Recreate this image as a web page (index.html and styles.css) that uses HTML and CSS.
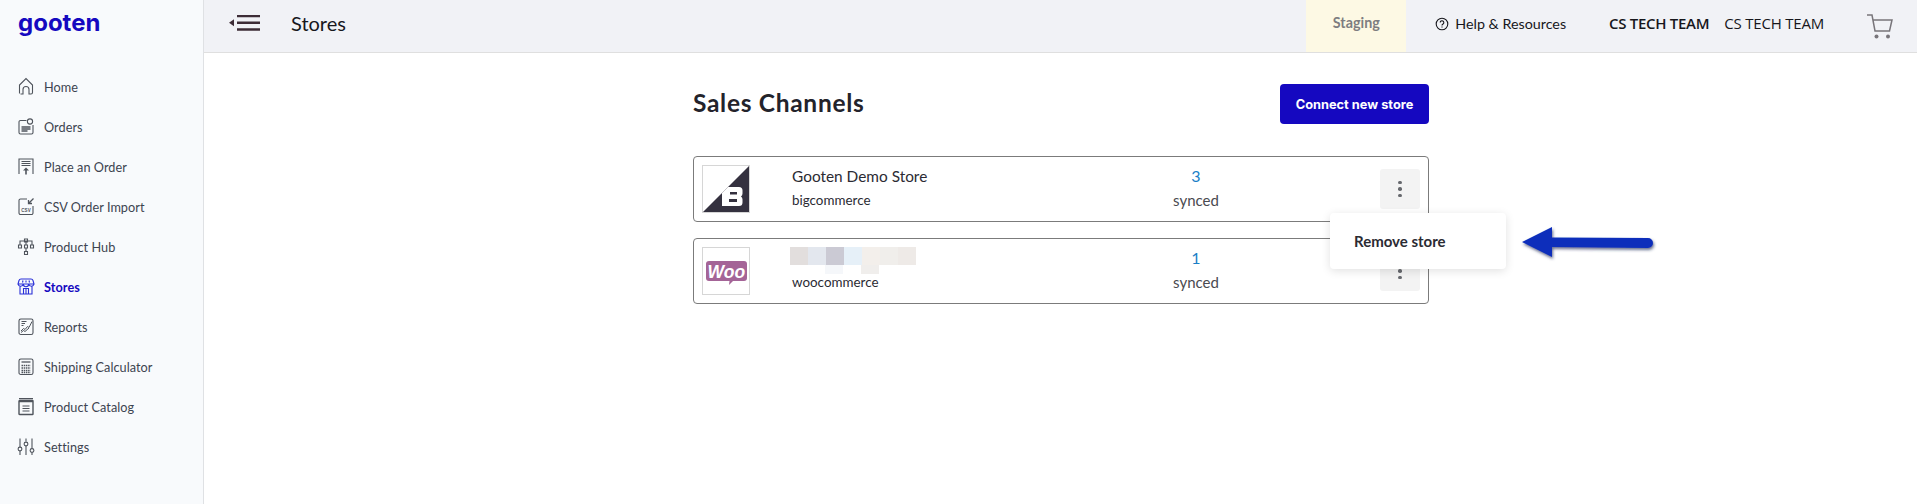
FILE: index.html
```html
<!DOCTYPE html>
<html lang="en">
<head>
<meta charset="utf-8">
<title>Stores</title>
<link rel="stylesheet" href="styles.css">
</head>
<body>
<div class="app">
  <aside class="sidebar">
    <div class="logo">gooten</div>
    <nav class="nav">
      <a class="nav-item"><svg class="ico" viewBox="0 0 16 16"><path d="M1.500 14.500V6L8 -.5 14.500 6v7.500a1.500 1.500 0 0 1-1.500 1.500H11V10.500a3 3 0 0 0-6 0V15H2.500"/></svg>Home</a>
      <a class="nav-item"><svg class="ico" viewBox="0 0 16 16"><path d="M8.500 1.500H2.500A1.500 1.500 0 0 0 1 3v10.500A1.500 1.500 0 0 0 2.500 15h11a1.500 1.500 0 0 0 1.500-1.500V6"/><circle cx="12" cy="2.500" r="2.600"/><path d="M3.500 8h9M3.500 10h9M3.500 12h6" stroke-width="1.300"/></svg>Orders</a>
      <a class="nav-item"><svg class="ico" viewBox="0 0 16 16"><path d="M1 15V0h14v15M3.500 2.500h9M3.500 4.500h9M3.500 6.500h9"/><path d="M8 15.500v-5" stroke-width="1.600"/><path class="ico-fill" d="M5 11.500 8 8.500l3 3z"/></svg>Place an Order</a>
      <a class="nav-item"><svg class="ico" viewBox="0 0 16 16"><path d="M9 0H2.500A1.500 1.500 0 0 0 1 1.500V14a1.500 1.500 0 0 0 1.500 1.500h11A1.500 1.500 0 0 0 15 14V7"/><path d="M15.500 -.5 10.500 4.500M10.500 1v3.500h3.500" stroke-width="1.300"/><text x="8" y="12.500" class="csv">CSV</text></svg>CSV Order Import</a>
      <a class="nav-item"><svg class="ico" viewBox="0 0 16 16"><path d="M6.500 0h3v3h-3zM.5 6h3v3h-3zM6.500 6h3v3h-3zM12.500 6h3v3h-3zM6.500 12.500h3v3h-3zM2 6V2h12v4M8 3v3M8 9v3.500"/></svg>Product Hub</a>
      <a class="nav-item active"><svg class="ico" viewBox="0 0 16 16"><path d="M3 0h10q1.500 0 2 1.500L16 5H0L1 1.500Q1.500 0 3 0zM0 5a2.700 2.700 0 0 0 5.300 0 2.700 2.700 0 0 0 5.400 0 2.700 2.700 0 0 0 5.300 0M2 7.500V15h12V7.500M5.500 15V9.500h5V15M8 9.500V15M5 1.500 4.500 3.500M8 1.500v2M11 1.500l.5 2"/></svg>Stores</a>
      <a class="nav-item"><svg class="ico" viewBox="0 0 16 16"><rect x="1" y="0" width="14" height="15.500" rx="1.800"/><path d="M3.500 2.500h5M3.500 4.500h3.500M3.500 6.500h2M3 12l2.500-2.500 1.500 1 2.500-3 1.500 1 3-6M3 13.500l2.500-2 1.500 1 4-3.500" stroke-width="1"/></svg>Reports</a>
      <a class="nav-item"><svg class="ico" viewBox="0 0 16 16"><rect x="1" y="0" width="14" height="15.500" rx="1.800"/><path d="M3.500 3h9" stroke-width="1.300"/><path d="M3.500 6.500h9M3.500 9h9M3.500 11.500h9M3.500 13.500h9" stroke-width="1.300" stroke-dasharray="1.500 .7"/></svg>Shipping Calculator</a>
      <a class="nav-item"><svg class="ico" viewBox="0 0 16 16"><rect x="1" y="1.500" width="14" height="14" rx=".6" stroke-width="1.400"/><path d="M1 -.5h14" stroke-width="1"/><path d="M1 2h14" stroke-width="2.500"/><path d="M4.500 7h7M4.500 9.500h7M4.500 12h7"/></svg>Product Catalog</a>
      <a class="nav-item"><svg class="ico" viewBox="0 0 16 16"><path d="M2 -.5v8.500M2 12v4M8 -.5v3M8 7v9M14 -.5v10M14 13.500V16"/><circle cx="2" cy="10" r="1.900"/><circle cx="8" cy="5" r="1.900"/><circle cx="14" cy="11.500" r="1.900"/></svg>Settings</a>
    </nav>
  </aside>
  <div class="content">
    <header class="topbar">
      <div class="topbar-left">
        <svg class="menu-toggle" viewBox="0 0 32 16"><path class="menu-tip" d="M0 7.700l5-3.500v7z"/><path class="menu-bars" d="M8 1h23M8 7.700h23M8 14.500h23"/></svg>
        <span class="page-title">Stores</span>
      </div>
      <div class="topbar-right">
        <div class="env">Staging</div>
        <div class="help"><svg class="help-ico" viewBox="0 0 14 14"><circle cx="7" cy="7" r="5.800"/><path d="M5.200 5.600a1.800 1.800 0 1 1 2.800 1.500c-.7.400-1 .8-1 1.500"/><path d="M7 9.600v1"/></svg>Help &amp; Resources</div>
        <div class="team team-strong">CS TECH TEAM</div>
        <div class="team">CS TECH TEAM</div>
        <svg class="cart" viewBox="0 0 26 25"><path d="M0 1h5l3 16h14.500L25 6H6"/><circle cx="9.500" cy="22.500" r="2" class="cart-wheel"/><circle cx="21" cy="22.500" r="2" class="cart-wheel"/></svg>
      </div>
    </header>
    <main class="main">
      <div class="channels">
        <div class="channels-head">
          <h1 class="channels-title">Sales Channels</h1>
          <button class="connect">Connect new store</button>
        </div>
        <div class="store-card">
          <div class="store-logo">
            <svg viewBox="0 0 46 46" class="store-svg"><path class="bc" d="M46 0v46H0z"/><path class="bc-b" d="M25 21h11q3.500 0 3.500 3.500v3q0 2-1.500 3 1.500 1 1.500 3v3q0 3.500-3.500 3.500H19V27zM27 26v2.500h7V26zM26 33v3h8v-3z"/></svg>
          </div>
          <div class="store-info">
            <div class="store-name">Gooten Demo Store</div>
            <div class="store-type">bigcommerce</div>
          </div>
          <div class="store-sync">
            <div class="sync-count">3</div>
            <div class="sync-label">synced</div>
          </div>
          <div class="kebab"><i></i><i></i><i></i></div>
          <div class="popup">Remove store</div>
        </div>
        <div class="store-card">
          <div class="store-logo">
            <svg viewBox="0 0 46 46" class="store-svg"><path class="woo" d="M6 13h35q3 0 3 3v14q0 3-3 3H30l-4 4 .5-4H6q-3 0-3-3V16q0-3 3-3z"/><text x="4.500" y="29.500" class="woo-text">Woo</text></svg>
          </div>
          <div class="store-info">
            <div class="blur-name">
              <div class="blur-row"><i class="b1"></i><i class="b2"></i><i class="b3"></i><i class="b4"></i><i class="b5"></i><i class="b6"></i><i class="b7"></i></div>
              <div class="blur-row blur-low"><i class="b8"></i><i class="b9"></i></div>
            </div>
            <div class="store-type">woocommerce</div>
          </div>
          <div class="store-sync">
            <div class="sync-count">1</div>
            <div class="sync-label">synced</div>
          </div>
          <div class="kebab"><i></i><i></i><i></i></div>
        </div>
      </div>
      <svg class="arrow" viewBox="0 0 140 44"><defs><filter id="s" x="-20%" y="-40%" width="140%" height="180%"><feDropShadow dx="1" dy="2" stdDeviation="1.500" flood-color="#2a3560" flood-opacity=".7"/></filter></defs><path class="arrow-shape" filter="url(#s)" d="M2 21 32 6V16.500L128 17a5 5 0 0 1 0 10L32 26V36z"/></svg>
    </main>
  </div>
</div>
</body>
</html>
```
FILE: styles.css
```css
* { box-sizing: border-box; }
html, body { margin: 0; height: 100%; }
body { font-family: "Lato", "Noto Sans", sans-serif; color: #2b2b33; background: #fff; overflow: hidden; }
.app { display: flex; height: 504px; }

.sidebar { width: 204px; flex: none; background: #f8fafc; border-right: 1px solid #dfe1e4; padding: 10px 0 0 18px; }
.logo { font-family: "Inter", sans-serif; font-size: 24px; line-height: 26px; font-weight: 700; color: #1508c0; height: 26px; }
.nav { display: flex; flex-direction: column; margin-top: 31px; }
.nav-item { display: flex; align-items: center; height: 40px; gap: 10px; font-size: 12.700px; letter-spacing: .05px; color: #3d4450; }
.ico { width: 16px; height: 16px; flex: none; fill: none; stroke: #4f545c; stroke-width: 1.100; overflow: visible; }
.ico-fill { fill: #4f545c; stroke: none; }
.csv { font-family: "Liberation Sans", sans-serif; font-size: 4.500px; font-weight: 700; fill: #4f545c; stroke: none; text-anchor: middle; }
.active { color: #1508c0; font-weight: 700; }
.active .ico { stroke: #2a30d8; }

.content { flex: 1; display: flex; flex-direction: column; min-width: 0; }
.topbar { display: flex; justify-content: space-between; height: 53px; background: #f1f2f6; border-bottom: 1px solid #dfdfdf; flex: none; }
.topbar-left { display: flex; align-items: center; padding: 0 0 6px 25px; }
.menu-toggle { width: 32px; height: 16px; }
.menu-tip { fill: #3d2c36; }
.menu-bars { fill: none; stroke: #3d2c36; stroke-width: 2.500; }
.page-title { margin: 0 0 1px 30px; font-size: 20px; color: #17171c; }
.topbar-right { display: flex; align-items: center; }
.env { width: 100px; height: 52px; background: #fdf9e4; display: flex; align-items: center; justify-content: center; font-size: 14.300px; font-weight: 700; color: #7d7d80; padding-bottom: 7px; }
.help { display: flex; align-items: center; gap: 6px; margin-left: 29px; padding-bottom: 5px; font-size: 14.300px; color: #17171c; }
.help-ico { width: 14px; height: 14px; fill: none; stroke: #17171c; stroke-width: 1.100; }
.team { font-family: "Open Sans", sans-serif; font-size: 15px; color: #17171c; margin-left: 15px; padding-bottom: 7px; letter-spacing: -.2px; }
.team-strong { font-weight: 600; margin-left: 43px; letter-spacing: -.3px; }
.cart { width: 26px; height: 25px; margin-left: 43px; margin-right: 24px; fill: none; stroke: #78757a; stroke-width: 1.500; }
.cart-wheel { fill: #78757a; stroke: none; }

.main { flex: 1; position: relative; padding-left: 489px; }
.channels { width: 736px; }
.channels-head { display: flex; justify-content: space-between; align-items: center; height: 40px; margin-top: 31px; }
.channels-title { margin: 0 0 3px; font-size: 24.500px; font-weight: 700; color: #23232b; letter-spacing: .7px; }
.connect { width: 149px; height: 40px; background: #1508c0; color: #fff; border: 0; border-radius: 4px; font-family: "Inter", sans-serif; font-size: 12.800px; font-weight: 700; }
.store-card { position: relative; display: flex; align-items: center; height: 66px; margin-top: 16px; padding: 8px; border: 1px solid #7b7b7b; border-radius: 4px; }
.channels-head + .store-card { margin-top: 32px; }
.store-logo { width: 48px; height: 48px; flex: none; border: 1px solid #d6d6d6; }
.store-svg { display: block; width: 46px; height: 46px; }
.bc { fill: #34313f; }
.bc-b { fill: #fff; fill-rule: evenodd; }
.woo { fill: #a46497; }
.woo-text { font-family: "Liberation Sans", sans-serif; font-style: italic; font-weight: 700; font-size: 17.500px; fill: #fff; }
.store-info { margin-left: 42px; width: 354px; flex: none; padding-bottom: 2px; }
.store-name { font-size: 15.400px; line-height: 24px; color: #2b2b33; }
.store-type { font-size: 13.400px; line-height: 24px; color: #2b2b33; }
.store-sync { width: 100px; text-align: center; padding-bottom: 2px; }
.sync-count { font-size: 16px; line-height: 24px; color: #1a7fc7; }
.sync-label { font-size: 15px; line-height: 24px; color: #4a4a50; }
.kebab { margin-left: auto; width: 40px; height: 40px; background: #f3f3f3; border-radius: 3px; display: flex; flex-direction: column; align-items: center; justify-content: center; gap: 3px; }
.kebab i { width: 3.500px; height: 3.500px; border-radius: 50%; background: #66686d; }
.popup { position: absolute; z-index: 2; left: 636px; top: 56px; width: 176px; height: 56px; background: #fff; border-radius: 4px; box-shadow: 0 2px 10px rgba(0,0,0,.12); display: flex; align-items: center; padding-left: 24px; font-size: 15px; font-weight: 700; color: #2b2b33; }
.blur-name { height: 24px; margin: 1px 0 -1px -2px; }
.blur-row { display: flex; height: 18px; }
.blur-low { height: 9px; padding-left: 35px; }
.blur-row i { display: block; width: 18px; height: 100%; }
.b1 { background: #e2dedd; } .b2 { background: #e3e7ee; } .b3 { background: #cbcad4; } .b4 { background: #e6f0f8; } .b5 { background: #f3efeb; } .b6 { background: #f0eeeb; } .b7 { background: #eeeae7; }
.blur-low .b8 { background: #f5f7fa; margin-right: 18px; } .blur-low .b9 { background: #f0eeec; }
.arrow { position: absolute; left: 1316px; top: 168px; width: 140px; height: 44px; overflow: visible; }
.arrow-shape { fill: #0b2fbb; }
```
